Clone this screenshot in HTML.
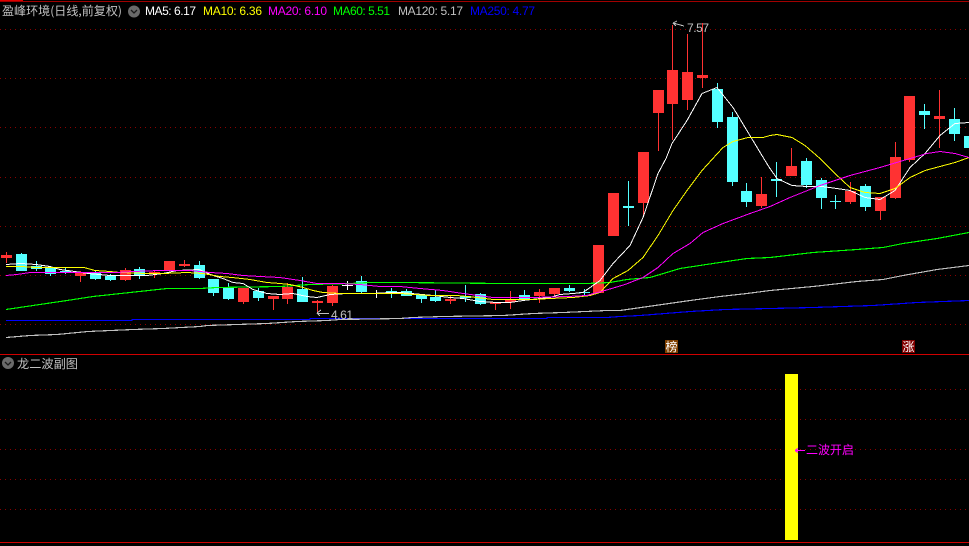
<!DOCTYPE html>
<html lang="zh-CN">
<head>
<meta charset="utf-8">
<title>盈峰环境</title>
<style>
html,body{margin:0;padding:0;background:#000;width:969px;height:546px;overflow:hidden}
svg{display:block}
text{font-family:"Liberation Sans","WenQuanYi Zen Hei",sans-serif;font-size:12px}
.cn{font-family:"WenQuanYi Zen Hei","Noto Sans CJK SC",sans-serif;font-size:12px}
</style>
</head>
<body>
<svg width="969" height="546" viewBox="0 0 969 546" xmlns="http://www.w3.org/2000/svg">
<rect width="969" height="546" fill="#000"/>
<g stroke="#8a0000" stroke-width="1" stroke-dasharray="1 4" shape-rendering="crispEdges">
<path d="M0 29.5H969M0 78.5H969M0 127.5H969M0 177.5H969M0 226.5H969M0 275.5H969M0 324.5H969M0 389.5H969M0 419.5H969M0 449.5H969M0 479.5H969M0 509.5H969"/>
</g>
<g fill="none" stroke="#b00000" shape-rendering="crispEdges">
<path d="M0 1.5H969" stroke="#a00000"/>
<path d="M0 .5H23" stroke="#e00000"/>
<path d="M0 354.5H969" stroke="#d00000"/>
<path d="M0 542.5H969" stroke="#d00000"/>
</g>

<path shape-rendering="crispEdges" fill="#ff3232" d="M6 252h1V263h-1zM1 255h11V258H1zM80 271h1V282h-1zM75 272h11V276H75zM125 268h1V281h-1zM120 270h11V280H120zM154 271h1V278h-1zM149 272h11V274H149zM164 261h11V271H164zM184 260h1V267h-1zM179 264h11V266H179zM243 288h1V304h-1zM238 288h11V302H238zM273 296h1V310h-1zM268 296h11V299H268zM287 283h1V304h-1zM282 287h11V299H282zM317 300h1V313h-1zM312 301h11V303H312zM332 285h1V306h-1zM327 286h11V303H327zM450 296h1V304h-1zM445 299h11V301H445zM495 302h1V310h-1zM490 302h11V304H490zM510 291h1V309h-1zM505 300h11V302H505zM539 289h1V303h-1zM534 292h11V296H534zM554 288h1V296h-1zM549 288h11V294H549zM593 245h11V293H593zM608 193h11V236H608zM643 152h1V217h-1zM638 152h11V203H638zM658 90h1V151h-1zM653 90h11V113H653zM672 25h1V140h-1zM667 70h11V104H667zM687 34h1V110h-1zM682 72h11V100H682zM702 23h1V88h-1zM697 75h11V78H697zM761 177h1V208h-1zM756 194h11V206H756zM791 148h1V176h-1zM786 166h11V176H786zM850 182h1V204h-1zM845 191h11V202H845zM880 197h1V220h-1zM875 197h11V211H875zM895 142h1V199h-1zM890 157h11V198H890zM909 96h1V162h-1zM904 96h11V160H904zM939 90h1V148h-1zM934 116h11V119H934z"/>

<path shape-rendering="crispEdges" fill="#54ffff" d="M21 253h1V271h-1zM16 254h11V271H16zM36 261h1V271h-1zM31 266h11V269H31zM50 267h1V276h-1zM45 267h11V274H45zM65 268h1V274h-1zM60 271h11V273H60zM95 270h1V280h-1zM90 272h11V279H90zM110 274h1V281h-1zM105 276h11V280H105zM139 267h1V279h-1zM134 269h11V275H134zM199 261h1V279h-1zM194 265h11V278H194zM213 279h1V296h-1zM208 279h11V293H208zM228 283h1V300h-1zM223 287h11V299H223zM258 288h1V301h-1zM253 291h11V298H253zM302 277h1V302h-1zM297 289h11V302H297zM361 276h1V293h-1zM356 281h11V292H356zM391 288h1V298h-1zM386 291h11V293H386zM406 289h1V296h-1zM401 291h11V296H401zM421 295h1V303h-1zM416 295h11V299H416zM435 290h1V302h-1zM430 297h11V301H430zM465 285h1V302h-1zM460 296h11V298H460zM480 293h1V305h-1zM475 294h11V304H475zM524 290h1V300h-1zM519 295h11V299H519zM569 285h1V292h-1zM564 288h11V291H564zM584 289h1V295h-1zM579 292h11V293H579zM628 181h1V226h-1zM623 206h11V208H623zM717 83h1V128h-1zM712 89h11V122H712zM732 112h1V186h-1zM727 117h11V182H727zM746 183h1V207h-1zM741 191h11V202H741zM776 162h1V197h-1zM771 179h11V181H771zM806 158h1V188h-1zM801 161h11V185H801zM821 178h1V209h-1zM816 180h11V198H816zM835 195h1V209h-1zM830 201h11V202H830zM865 184h1V211h-1zM860 186h11V207H860zM924 104h1V129h-1zM919 111h11V115H919zM954 108h1V141h-1zM949 119h11V134H949zM964 136h5V148h-5z"/>

<path shape-rendering="crispEdges" fill="#ffffff" d="M347 281h1V290h-1zM342 285h11V286H342zM376 290h1V298h-1zM371 293h11V294H371z"/>

<g fill="none" stroke-width="1.15" shape-rendering="crispEdges">
<polyline stroke="#0000ff" points="6,320.5 132,320.5 132,319.5 310,319.5 310,318.5 547,318.5 547,317.5 607,317.5 620,316.5 640,315.5 690,311.5 725,309.5 770,308.5 813,307.5 873,305.5 917,302.5 969,300.5"/>
<polyline stroke="#c0c0c0" points="6,337.5 30,335.5 57,334.5 88,331.5 133,329.5 163,328.5 200,326.5 207,325.5 237,324.5 267,323.5 297,321.5 327,320.5 340,319.5 400,318.5 413,317.5 443,316.5 503,315.5 533,313.5 563,312.5 607,310.5 620,310.5 690,300.5 720,296.5 747,293.5 770,290.5 813,286.5 857,281.5 883,279.5 903,275.5 937,269.5 969,265.5"/>
<polyline stroke="#00ff00" points="6,309.5 33,305.5 67,300.5 93,296.5 130,292.5 167,288.5 200,288.5 217,287.5 280,286.5 310,284.5 350,283.5 370,282.5 400,282.5 503,283.5 587,283.5 610,282.5 627,279.5 650,277.5 680,268.5 713,263.5 747,258.5 770,257.5 813,252.5 857,249.5 883,247.5 903,243.5 937,238.5 969,232.5"/>
<polyline stroke="#ffffff" stroke-width="1" points="6,264.5 21,263.5 36,264.5 50,266.5 60,269.5 75,271.5 88,273.5 110,275.5 133,275.5 147,275.5 163,273.5 177,270.5 199,269.5 213,275.5 223,278.5 233,282.5 243,283.5 253,289.5 267,293.5 280,294.5 293,293.5 307,296.5 317,297.5 330,294.5 347,293.5 373,293.5 390,292.5 400,292.5 433,295.5 450,297.5 463,298.5 480,301.5 497,302.5 510,302.5 523,300.5 540,298.5 550,297.5 560,294.5 573,293.5 583,292.5 600,280.5 613,263.5 630,245.5 643,217.5 658,173.5 666,158.5 672,143.5 687,120.5 702,93.5 717,87.5 733,107.5 765,160.5 770,168.5 777,178.5 792,185.5 807,186.5 822,186.5 837,188.5 850,190.5 865,197.5 880,199.5 895,190.5 910,167.5 925,153.5 940,135.5 955,123.5 969,122.5"/>
<polyline stroke="#ffff00" stroke-width="1" points="6,266.5 21,266.5 36,267.5 84,267.5 95,270.5 110,271.5 120,272.5 147,273.5 163,273.5 187,272.5 203,273.5 220,276.5 232,277.5 250,279.5 267,282.5 280,283.5 290,284.5 303,287.5 313,290.5 323,292.5 340,293.5 400,293.5 430,295.5 457,295.5 477,297.5 493,299.5 533,299.5 550,298.5 573,297.5 590,295.5 600,292.5 613,278.5 628,270.5 643,257.5 658,235.5 673,210.5 687,190.5 702,170.5 712,159.5 723,147.5 733,141.5 748,137.5 763,137.5 770,135.5 777,134.5 792,137.5 805,145.5 820,158.5 835,173.5 850,187.5 865,192.5 880,193.5 895,188.5 910,177.5 925,170.5 940,166.5 955,162.5 969,157.5"/>
<polyline stroke="#ff00ff" stroke-width="1" points="6,275.5 17,274.5 30,272.5 67,272.5 80,272.5 117,272.5 133,271.5 160,270.5 190,270.5 200,271.5 210,272.5 227,273.5 243,275.5 260,276.5 280,277.5 300,280.5 317,283.5 340,283.5 360,284.5 380,286.5 400,286.5 420,288.5 443,290.5 463,293.5 493,297.5 533,297.5 567,296.5 587,295.5 590,294.5 605,290.5 625,284.5 643,277.5 658,267.5 673,253.5 690,243.5 703,232.5 723,223.5 750,213.5 770,206.5 790,197.5 820,185.5 850,175.5 880,167.5 910,158.5 927,153.5 940,151.5 955,153.5 969,157.5"/>
</g>

<text class="cn" x="2" y="15" fill="#c0c0c0" textLength="120" lengthAdjust="spacingAndGlyphs">盈峰环境(日线,前复权)</text>
<circle cx="134" cy="11.5" r="6" fill="#6a6a6a"/>
<path d="M131 10l3 3 3-3" fill="none" stroke="#1a1a1a" stroke-width="1.3"/>
<text x="145" y="15" fill="#ffffff" textLength="51">MA5: 6.17</text>
<text x="203" y="15" fill="#ffff00" textLength="59">MA10: 6.36</text>
<text x="268" y="15" fill="#ff00ff" textLength="59">MA20: 6.10</text>
<text x="333" y="15" fill="#00ff00" textLength="57">MA60: 5.51</text>
<text x="398" y="15" fill="#c0c0c0" textLength="65">MA120: 5.17</text>
<text x="470" y="15" fill="#0000ff" textLength="65">MA250: 4.77</text>

<path d="M673 23l4-2M673 23l3 3M673 23L684 26" fill="none" stroke="#c0c0c0" shape-rendering="crispEdges"/>
<text x="687" y="32" fill="#c0c0c0" textLength="22">7.57</text>
<path d="M317 313l4-3M317 313l3 3M317 313.500H329" fill="none" stroke="#c0c0c0" shape-rendering="crispEdges"/>
<text x="331" y="319" fill="#c0c0c0" textLength="22">4.61</text>

<rect x="665" y="340" width="13" height="13" fill="#804000"/>
<text class="cn" x="665.500" y="351" fill="#ffffff">榜</text>
<rect x="902" y="340" width="13" height="13" fill="#800000"/>
<text class="cn" x="902.500" y="351" fill="#ffffff">涨</text>

<circle cx="8" cy="363" r="6" fill="#6a6a6a"/>
<path d="M5 362l3 3 3-3" fill="none" stroke="#1a1a1a" stroke-width="1.3"/>
<text class="cn" x="17" y="368" fill="#c0c0c0" textLength="61" lengthAdjust="spacingAndGlyphs">龙二波副图</text>

<rect x="785" y="374" width="13" height="166" fill="#ffff00"/>
<path d="M795 450.500H805M795 450.500l3-2M795 450.500l3 2" fill="none" stroke="#ff00ff" shape-rendering="crispEdges"/>
<text class="cn" x="806" y="454" fill="#ff00ff" textLength="48" lengthAdjust="spacingAndGlyphs">二波开启</text>
</svg>
</body>
</html>
